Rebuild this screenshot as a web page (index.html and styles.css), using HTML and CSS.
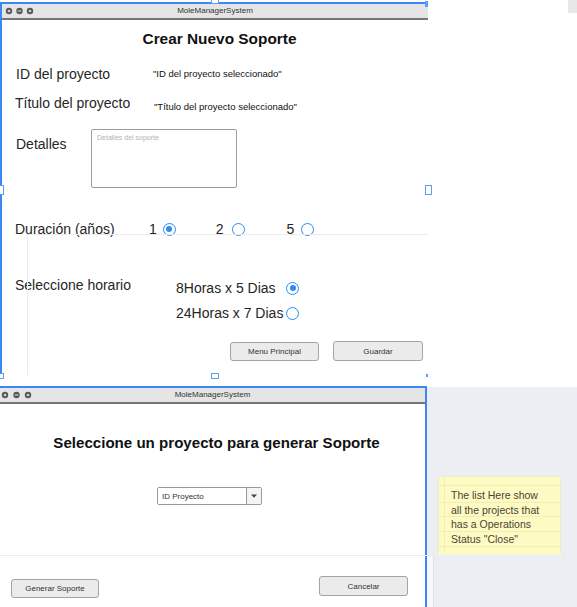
FILE: index.html
```html
<!DOCTYPE html>
<html lang="es">
<head>
<meta charset="utf-8">
<title>MoleManagerSystem</title>
<link rel="stylesheet" href="styles.css">
</head>
<body>
<div class="canvas">
  <div class="desk"></div>
  <div class="chip"></div>

  <section class="win win1">
    <header class="titlebar">
      <svg class="dots" width="34" height="8" viewBox="0 0 34 8">
        <circle cx="5" cy="4" r="3.2" fill="#585858"/><circle cx="5" cy="4" r="1.3" fill="#cfcfcf"/>
        <circle cx="15.5" cy="4" r="3.2" fill="#585858"/><rect x="13.8" y="3.4" width="3.4" height="1.2" fill="#cfcfcf"/>
        <circle cx="26" cy="4" r="3.2" fill="#585858"/><circle cx="26" cy="4" r="1.3" fill="#cfcfcf"/>
      </svg>
      <span class="wtitle">MoleManagerSystem</span>
      <span></span>
    </header>
    <div class="body1">
      <h1 class="h1">Crear Nuevo Soporte</h1>
      <div class="row row-id">
        <span class="lbl lbl-id">ID del proyecto</span>
        <span class="val">"ID del proyecto seleccionado"</span>
      </div>
      <div class="row row-tit">
        <span class="lbl lbl-tit">Título del proyecto</span>
        <span class="val val-low">"Título del proyecto seleccionado"</span>
      </div>
      <div class="row row-det">
        <span class="lbl lbl-det">Detalles</span>
        <div class="textarea"><span class="ph">Detalles del soporte</span></div>
      </div>
      <div class="row row-dur">
        <span class="lbl lbl-dur">Duración (años)</span>
        <span class="opt"><span class="num">1</span><span class="radio on"></span></span>
        <span class="opt opt2"><span class="num">2</span><span class="radio"></span></span>
        <span class="opt opt3"><span class="num">5</span><span class="radio"></span></span>
      </div>
      <div class="row row-hor">
        <span class="lbl lbl-hor">Seleccione horario</span>
        <div class="hor-grid">
          <span class="hopt">8Horas x 5 Dias</span><span class="radio on"></span>
          <span class="hopt">24Horas x 7 Dias</span><span class="radio"></span>
        </div>
      </div>
      <div class="btns1">
        <span class="btn btn-menu">Menu Principal</span>
        <span class="btn btn-save">Guardar</span>
      </div>
    </div>
    <div class="ghost1"></div>
  </section>

  <span class="handle h-top"></span>
  <span class="handle h-tr"></span>
  <span class="handle h-left"></span>
  <span class="handle h-right"></span>
  <span class="handle h-bl"></span>
  <span class="handle h-bm"></span>
  <span class="handle h-br"></span>

  <section class="win win2">
    <header class="titlebar">
      <svg class="dots" width="34" height="8" viewBox="0 0 34 8">
        <circle cx="5" cy="4" r="3.2" fill="#585858"/><circle cx="5" cy="4" r="1.3" fill="#cfcfcf"/>
        <circle cx="16.5" cy="4" r="3.2" fill="#585858"/><rect x="14.8" y="3.4" width="3.4" height="1.2" fill="#cfcfcf"/>
        <circle cx="28" cy="4" r="3.2" fill="#585858"/><circle cx="28" cy="4" r="1.3" fill="#cfcfcf"/>
      </svg>
      <span class="wtitle">MoleManagerSystem</span>
      <span></span>
    </header>
    <div class="body2">
      <h2 class="h2">Seleccione un proyecto para generar Soporte</h2>
      <div class="select">
        <span class="sel-text">ID Proyecto</span>
        <span class="sel-btn"><svg width="6" height="4" viewBox="0 0 6 4"><path d="M0 0.5h6L3 3.8z" fill="#444"/></svg></span>
      </div>
      <div class="btns2">
        <span class="btn btn-gen">Generar Soporte</span>
        <span class="btn btn-cancel">Cancelar</span>
      </div>
    </div>
  </section>
  <div class="ghost2"></div>

  <aside class="note">
    <p class="note-text">The list Here show all the projects that has a Operations Status "Close"</p>
  </aside>
</div>
</body>
</html>
```

FILE: styles.css
```css
* { box-sizing: border-box; }
html, body { margin: 0; padding: 0; background: #fff; }
body { font-family: "Liberation Sans", Arial, sans-serif; color: #222; }

.canvas { position: relative; width: 577px; height: 607px; overflow: hidden; background: #fff; }

.desk { position: absolute; left: 427px; top: 387px; right: 0; bottom: 0; background: #eceef3; }
.chip { position: absolute; left: 568px; top: 0; width: 9px; height: 13px; background: #e8e8e8; }

.win { position: absolute; background: #fff; }
.win1 { left: 0; top: 2px; width: 428px; height: 373px; border-top: 2px solid #3d87f3; border-left: 2px solid #3d87f3; }
.win2 { left: 0; top: 386px; width: 427px; height: 221px; border-top: 2px solid #3d87f3; border-right: 2px solid #3d87f3; }

.titlebar {
  height: 16px; background: #e5e5e5; border-bottom: 2px solid #767676;
  display: grid; grid-template-columns: 1fr auto 1fr; align-items: center;
}
.dots { display: block; margin-left: 2px; }
.win2 .dots { margin-left: 0; }
.wtitle { font-size: 8px; color: #333; line-height: 10px; }

.body1 { padding-left: 14px; display: flex; flex-direction: column; }
.h1 { margin: 10px 0 0; font-size: 15.4px; line-height: 18px; font-weight: bold; color: #111; text-align: center; padding-left: 9px; padding-right: 14px; }

.row { display: flex; align-items: center; }
.lbl { font-size: 14px; line-height: 18px; color: #262626; }
.val { font-size: 9.5px; line-height: 18px; color: #111; }

.row-id { margin-top: 17px; }
.lbl-id { width: 137px; }

.row-tit { margin-top: 11px; align-items: flex-end; margin-left: -1px; }
.lbl-tit { width: 139px; }
.val-low { line-height: 10px; }

.row-det { margin-top: 17px; align-items: flex-start; }
.lbl-det { width: 75px; padding-top: 6px; }
.textarea { width: 146px; height: 59px; border: 1px solid #9c9c9c; border-radius: 2px; padding: 3px 5px; }
.ph { display: block; font-size: 7px; line-height: 9px; color: #b3b3b3; }

.row-dur { margin-top: 32px; margin-left: -1px; }
.lbl-dur { width: 134px; }
.opt { display: flex; align-items: center; gap: 6px; }
.opt2 { margin-left: 40px; gap: 8px; }
.opt3 { margin-left: 42px; gap: 7px; }
.num { font-size: 14px; line-height: 18px; color: #262626; }

.radio { width: 13px; height: 13px; border: 1.5px solid #2a8cf7; border-radius: 50%; background: #fff; display: inline-flex; align-items: center; justify-content: center; }
.radio.on::after { content: ""; width: 6px; height: 6px; border-radius: 50%; background: #2a8cf7; }

.row-hor { margin-top: 38px; align-items: flex-start; margin-left: -1px; }
.lbl-hor { width: 161px; }
.hor-grid { margin-top: 3px; display: grid; grid-template-columns: 110px 13px; row-gap: 7px; align-items: center; }
.hopt { font-size: 14px; line-height: 18px; color: #262626; }

.btn {
  display: flex; align-items: center; justify-content: center;
  height: 20px; background: #ebebeb; border: 1.5px solid #a3a3a3; border-radius: 3px;
  font-size: 8px; color: #333;
}
.btns1 { margin-top: 19px; display: flex; justify-content: flex-end; gap: 14px; padding-right: 5px; }
.btn-menu { width: 89px; margin-top: 1px; height: 19px; }
.btn-save { width: 90px; }

.ghost1 { position: absolute; left: 25px; top: 230px; right: 0; bottom: 0; border-top: 1px solid #ececec; border-left: 1px solid #ececec; pointer-events: none; }

.handle { position: absolute; background: #fff; border: 1px solid #5b9cf5; }
.h-top { left: 211px; top: -2px; width: 8px; height: 6px; }
.h-tr { left: 425px; top: 1px; width: 3px; height: 6px; background: #5b9cf5; }
.h-left { left: -3px; top: 185px; width: 7px; height: 10px; }
.h-right { left: 425px; top: 185px; width: 7px; height: 10px; }
.h-bl { left: -3px; top: 373px; width: 7px; height: 6px; }
.h-bm { left: 211px; top: 373px; width: 8px; height: 6px; }
.h-br { left: 426px; top: 374px; width: 2px; height: 3px; background: #5b9cf5; border: none; }

.body2 { display: flex; flex-direction: column; }
.h2 { margin: 30px 0 0; font-size: 15.1px; line-height: 18px; font-weight: bold; color: #111; text-align: center; padding-left: 8px; }

.select { margin: 35px 0 0 157px; width: 105px; height: 18px; border: 1px solid #9a9a9a; border-radius: 2px; display: flex; align-items: stretch; }
.sel-text { flex: 1; font-size: 8px; color: #333; display: flex; align-items: center; padding-left: 4px; }
.sel-btn { width: 15px; border-left: 1px solid #9a9a9a; display: flex; align-items: center; justify-content: center; background: #f4f4f4; }
.sel-btn svg { display: block; }

.btns2 { margin-top: 71px; display: flex; justify-content: space-between; align-items: flex-start; padding: 0 17px 0 11px; }
.btn-gen { width: 88px; margin-top: 3px; height: 19px; }
.btn-cancel { width: 89px; }

.ghost2 {
  position: absolute; left: 0; top: 555px; width: 434px; height: 60px;
  border-top: 1px solid #ececec; border-right: 1px solid #e2e2e2;
  background: linear-gradient(to right, transparent 427px, #f7f7f8 427px);
  pointer-events: none;
}

.note {
  position: absolute; left: 438px; top: 476px; width: 123px; height: 76px;
  background-color: #fdfbc3;
  background-image:
    linear-gradient(to right, transparent 5px, #f3eeae 5px, #f3eeae 6px, transparent 6px),
    repeating-linear-gradient(to bottom, transparent 0, transparent 13.7px, #f3eeae 13.7px, #f3eeae 14.7px);
  background-position: 0 0, 0 11px;
  border: 1px solid #efeccb; border-bottom: none;
  padding: 11px 6px 0 12px;
}
.note::after {
  content: ""; position: absolute; left: -1px; right: -1px; bottom: -4px; height: 4px;
  background: radial-gradient(circle at 2.5px 0, #fdfbc3 2.6px, transparent 3px) repeat-x;
  background-size: 5px 4px;
}
.note-text { margin: 0; width: 90px; font-size: 10.5px; line-height: 14.7px; color: #4a4333; }
```
